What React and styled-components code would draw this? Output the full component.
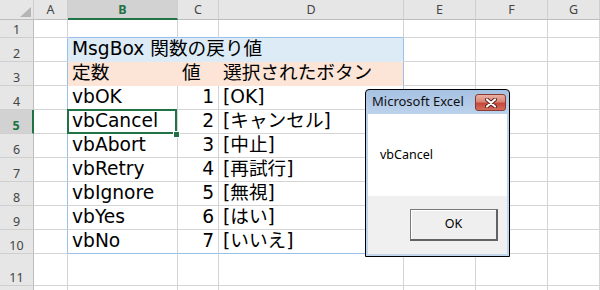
import React from "react";
import styled, { createGlobalStyle } from "styled-components";

const GRID = "#d4d4d4";
const TABLE_LINE = "#9bc2e6";
const GREEN = "#217346";
const HEAD_BG = "#e6e6e6";
const HEAD_ACTIVE = "#d2d2d2";

const GlobalStyle = createGlobalStyle`
  html, body {
    margin: 0;
    padding: 0;
    background: #fff;
  }
  body {
    width: 600px;
    height: 290px;
    overflow: hidden;
  }
`;

const COLS = ["A", "B", "C", "D", "E", "F", "G"];
const BODY_COLS = ["B", "C", "D"];

const DATA = [
  ["vbOK", 1, "[OK]"],
  ["vbCancel", 2, "[キャンセル]"],
  ["vbAbort", 3, "[中止]"],
  ["vbRetry", 4, "[再試行]"],
  ["vbIgnore", 5, "[無視]"],
  ["vbYes", 6, "[はい]"],
  ["vbNo", 7, "[いいえ]"],
];

// row 12 only peeks in at the bottom edge, its number is below the fold
const ROWS = [
  { n: 1 },
  { n: 2, fill: "#ddebf7", cells: { B: "MsgBox 関数の戻り値" }, span: true },
  { n: 3, fill: "#fce4d6", cells: { B: "定数", C: "値", D: "選択されたボタン" }, leftC: true },
  ...DATA.map(([name, val, btn], i) => ({ n: i + 4, cells: { B: name, C: val, D: btn } })),
  { n: 11 },
  { n: 12, hideLabel: true },
];

const edges = (n, col, fill) => {
  const inTable = n >= 2 && n <= 10;
  const inBody = BODY_COLS.includes(col);
  let right = GRID;
  let bottom = GRID;
  if (inTable && (col === "A" || col === "D")) right = TABLE_LINE;
  else if (fill && inBody) right = fill;
  if ((n === 1 || n === 10) && inBody) bottom = TABLE_LINE;
  else if (fill && inBody) bottom = fill;
  return { right, bottom };
};

const App = () => {
  return (
    <>
      <GlobalStyle />
      <Sheet>
        <Corner>
          <svg width="11" height="10" viewBox="0 0 11 10">
            <polygon points="11,0 11,10 0,10" fill="#b5b5b5" />
          </svg>
        </Corner>
        {COLS.map(c => (
          <ColHeader key={c} $active={c === "B"}>{c}</ColHeader>
        ))}

        {ROWS.map(row => (
          <React.Fragment key={row.n}>
            <RowHeader $active={row.n === 5}>{row.hideLabel ? null : row.n}</RowHeader>
            {COLS.map(col => {
              if (row.span && (col === "C" || col === "D")) return null;
              const e = edges(row.n, row.span && col === "B" ? "D" : col, row.fill);
              const value = row.cells ? row.cells[col] : undefined;
              return (
                <Cell
                  key={col}
                  $span={row.span && col === "B" ? 3 : 1}
                  $fill={BODY_COLS.includes(col) ? row.fill : undefined}
                  $right={e.right}
                  $bottom={e.bottom}
                  $align={col === "C" && !row.leftC ? "right" : "left"}
                  $selected={row.n === 5 && col === "B"}
                >
                  {value}
                  {row.n === 5 && col === "B" && <FillHandle />}
                </Cell>
              );
            })}
          </React.Fragment>
        ))}

        <Dialog>
          <TitleBar>
            <Title>Microsoft Excel</Title>
            <CloseButton>
              <svg width="12" height="10" viewBox="0 0 12 10">
                <path d="M2 1.5 L10 8.5 M10 1.5 L2 8.5" stroke="#5a1e18" strokeWidth="4" strokeLinecap="round" />
                <path d="M2 1.5 L10 8.5 M10 1.5 L2 8.5" stroke="#fff" strokeWidth="2.2" strokeLinecap="round" />
              </svg>
            </CloseButton>
          </TitleBar>
          <Message>vbCancel</Message>
          <ButtonArea>
            <OkButton>OK</OkButton>
          </ButtonArea>
        </Dialog>
      </Sheet>
    </>
  );
};

const Sheet = styled.div`
  position: relative;
  display: grid;
  grid-template-columns: 34px 34px 110px 41px 185px 72px 72px 52px;
  grid-template-rows: 20px 18px repeat(9, 24px) 32px 24px;
  width: 600px;
  height: 290px;
  overflow: hidden;
  background: #fff;
`;

const Corner = styled.div`
  box-sizing: border-box;
  background: ${HEAD_BG};
  border-right: 1px solid #cfcfcf;
  border-bottom: 1px solid #bdbdbd;
  display: flex;
  align-items: flex-end;
  justify-content: flex-end;
  padding: 0 2px 2px 0;
`;

const ColHeader = styled.div`
  box-sizing: border-box;
  background: ${p => (p.$active ? HEAD_ACTIVE : HEAD_BG)};
  border-right: 1px solid #cfcfcf;
  border-bottom: ${p => (p.$active ? `2px solid ${GREEN}` : "1px solid #bdbdbd")};
  color: ${p => (p.$active ? GREEN : "#444")};
  font-family: "Noto Sans", sans-serif;
  font-size: 12.5px;
  font-weight: ${p => (p.$active ? 700 : 400)};
  line-height: 19px;
  text-align: center;
`;

const RowHeader = styled.div`
  box-sizing: border-box;
  display: flex;
  align-items: flex-end;
  justify-content: center;
  background: ${p => (p.$active ? HEAD_ACTIVE : HEAD_BG)};
  border-right: ${p => (p.$active ? `2px solid ${GREEN}` : "1px solid #bdbdbd")};
  border-bottom: 1px solid #cfcfcf;
  color: ${p => (p.$active ? GREEN : "#444")};
  font-family: "Noto Sans", sans-serif;
  font-size: 12.5px;
  font-weight: ${p => (p.$active ? 700 : 400)};
  line-height: 14px;
`;

const Cell = styled.div`
  position: ${p => (p.$selected ? "relative" : "static")};
  grid-column: span ${p => p.$span};
  box-sizing: border-box;
  background: ${p => p.$fill || "#fff"};
  border-right: 1px solid ${p => p.$right};
  border-bottom: 1px solid ${p => p.$bottom};
  padding: 0 4px;
  color: #000;
  font-family: "DejaVu Sans", "Noto Sans CJK JP", sans-serif;
  font-size: 18.67px;
  line-height: 22px;
  text-align: ${p => p.$align};
  white-space: nowrap;

  ${p =>
    p.$selected &&
    `
    &::after {
      content: "";
      position: absolute;
      top: -1px;
      left: -1px;
      right: 0;
      bottom: -1px;
      border: 2px solid ${GREEN};
      pointer-events: none;
    }
  `}
`;

const FillHandle = styled.span`
  position: absolute;
  left: 105px;
  top: 21px;
  width: 5px;
  height: 5px;
  background: ${GREEN};
  border: 1px solid #fff;
  z-index: 2;
`;

const Dialog = styled.div`
  position: absolute;
  left: 365px;
  top: 89px;
  z-index: 10;
  width: 145px;
  height: 168px;
  box-sizing: border-box;
  display: flex;
  flex-direction: column;
  padding: 0 2px 2px;
  border: 1px solid #000;
  border-radius: 4px 4px 0 0;
  background: linear-gradient(#a6c1e2, #bcd2ec 24px, #c2d7ee);
  font-family: "Noto Sans", sans-serif;
  font-size: 12.5px;
  color: #000;
`;

const TitleBar = styled.div`
  display: flex;
  align-items: flex-start;
  justify-content: space-between;
  height: 24px;
  flex-shrink: 0;
`;

const Title = styled.span`
  padding-left: 4px;
  line-height: 22px;
  font-size: 13px;
  color: #111;
`;

const CloseButton = styled.div`
  display: flex;
  align-items: center;
  justify-content: center;
  width: 31px;
  height: 17px;
  margin: 4px 1px 0 0;
  box-sizing: border-box;
  border: 1px solid #8a3a31;
  border-radius: 3px;
  background: linear-gradient(#eab0a4, #d88676 45%, #c4493b 55%, #d36d5d);
`;

const Message = styled.div`
  height: 82px;
  box-sizing: border-box;
  padding: 33px 0 0 12px;
  background: #fff;
  line-height: 15px;
`;

const ButtonArea = styled.div`
  flex: 1;
  display: flex;
  justify-content: flex-end;
  align-items: flex-start;
  padding: 13px 9px 0 0;
  background: #f0f0f0;
`;

const OkButton = styled.div`
  box-sizing: border-box;
  width: 88px;
  height: 32px;
  display: flex;
  align-items: center;
  justify-content: center;
  padding-bottom: 3px;
  border: 1px solid #7a7a7a;
  border-right: 2px solid #626262;
  border-bottom: 2px solid #626262;
  box-shadow: inset 1px 1px 0 #fff;
  background: #efefef;
`;

export default App;
